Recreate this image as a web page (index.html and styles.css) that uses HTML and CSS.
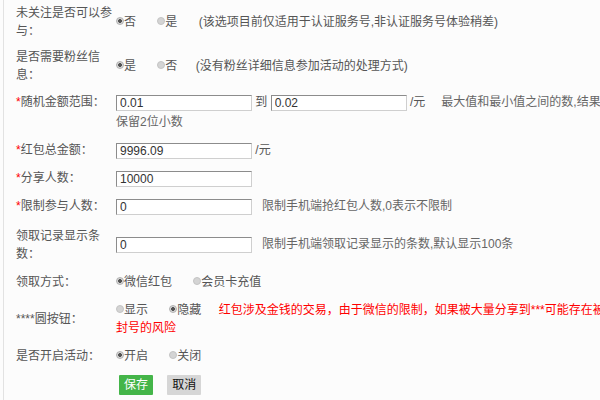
FILE: index.html
```html
<!DOCTYPE html>
<html lang="zh-CN">
<head>
<meta charset="UTF-8">
<title>红包活动设置</title>
<link rel="stylesheet" href="styles.css">
</head>
<body>

<div class="page">
  <form class="form">

    <div class="row">
      <div class="label two-line">未关注是否可以参与：</div>
      <div class="field">
        <label class="opt"><input type="radio" name="follow" checked>否</label>
        <label class="opt"><input type="radio" name="follow">是</label>
        <span class="note">(该选项目前仅适用于认证服务号,非认证服务号体验稍差)</span>
      </div>
    </div>

    <div class="row">
      <div class="label two-line">是否需要粉丝信息：</div>
      <div class="field">
        <label class="opt"><input type="radio" name="fans" checked>是</label>
        <label class="opt"><input type="radio" name="fans">否</label>
        <span class="note note-tight">(没有粉丝详细信息参加活动的处理方式)</span>
      </div>
    </div>

    <div class="row row-top">
      <div class="label"><span class="req">*</span>随机金额范围：</div>
      <div class="field">
        <input type="text" class="txt" value="0.01"> 到 <input type="text" class="txt" value="0.02"> /元<span class="help help-wide">最大值和最小值之间的数,结果保留2位小数</span>
      </div>
    </div>

    <div class="row">
      <div class="label"><span class="req">*</span>红包总金额：</div>
      <div class="field">
        <input type="text" class="txt" value="9996.09"> /元
      </div>
    </div>

    <div class="row">
      <div class="label"><span class="req">*</span>分享人数：</div>
      <div class="field">
        <input type="text" class="txt" value="10000">
      </div>
    </div>

    <div class="row">
      <div class="label"><span class="req">*</span>限制参与人数：</div>
      <div class="field">
        <input type="text" class="txt" value="0"><span class="help">限制手机端抢红包人数,0表示不限制</span>
      </div>
    </div>

    <div class="row">
      <div class="label two-line label-pad">领取记录显示条数：</div>
      <div class="field">
        <input type="text" class="txt" value="0"><span class="help">限制手机端领取记录显示的条数,默认显示100条</span>
      </div>
    </div>

    <div class="row">
      <div class="label">领取方式：</div>
      <div class="field">
        <label class="opt"><input type="radio" name="way" checked>微信红包</label>
        <label class="opt"><input type="radio" name="way">会员卡充值</label>
      </div>
    </div>

    <div class="row">
      <div class="label">****圆按钮：</div>
      <div class="field field-text">
        <label class="opt"><input type="radio" name="btn">显示</label>
        <label class="opt"><input type="radio" name="btn" checked>隐藏</label>
        <span class="warn">红包涉及金钱的交易，由于微信的限制，如果被大量分享到***可能存在被封号的风险</span>
      </div>
    </div>

    <div class="row">
      <div class="label">是否开启活动：</div>
      <div class="field">
        <label class="opt"><input type="radio" name="open" checked>开启</label>
        <label class="opt"><input type="radio" name="open">关闭</label>
      </div>
    </div>

    <div class="row">
      <div class="label"></div>
      <div class="field actions">
        <button type="button" class="btn btn-save">保存</button>
        <button type="button" class="btn btn-cancel">取消</button>
      </div>
    </div>

  </form>
</div>

</body>
</html>
```

FILE: styles.css
```css
* { box-sizing: border-box; margin: 0; padding: 0; }
html, body { background: #fcfcfc; overflow: hidden; }
body { font-family: "Liberation Sans", "Noto Sans CJK SC", sans-serif; font-size: 12px; color: #555; }

.page { margin-left: 3px; border-left: 1px solid #e2e2e2; min-height: 400px; padding: 4px 0 0 12px; width: 610px; }
.form { display: flex; flex-direction: column; gap: 8px; }

.row { display: grid; grid-template-columns: 100px 493px; align-items: center; }
.row-top { align-items: start; }
.label { line-height: 20px; color: #555; }
.two-line { line-height: 18px; }
.label-pad { padding: 3px 0 1px; }
.req { color: #f00; }

.field { line-height: 20px; }
.field-text { line-height: 18px; padding: 1px 0; }

.opt { display: inline-block; margin-right: 18px; white-space: nowrap; }
.opt input { appearance: none; -webkit-appearance: none; width: 8px; height: 8px; border-radius: 50%; background: #d4d4d4; border: 1px solid #c4c4c4; vertical-align: 1px; }
.opt input:checked { background: radial-gradient(circle, #555 0 1.6px, #d8d8d8 2.2px); border-color: #b0b0b0; }

.note-tight { margin-left: -3px; }

.txt { width: 136px; height: 16px; padding: 0 3px; font: 12px "Liberation Sans", sans-serif; color: #333; background: #fff; border: 1px solid #cfcfcf; border-top-color: #8c8c8c; border-left-color: #8c8c8c; vertical-align: middle; outline: none; }

.help { margin-left: 10px; color: #666; }
.help-wide { margin-left: 16px; }

.warn { color: #f00; margin-left: -4px; }

.actions { padding-left: 3px; white-space: nowrap; }
.btn { height: 20px; padding: 0 5px; border: none; border-radius: 1px; font: 12px "Liberation Sans", "Noto Sans CJK SC", sans-serif; line-height: 20px; vertical-align: middle; cursor: pointer; }
.btn-save { background: #44b549; color: #fff; }
.btn-cancel { background: #d6d6d6; color: #111; margin-left: 11px; }
```
